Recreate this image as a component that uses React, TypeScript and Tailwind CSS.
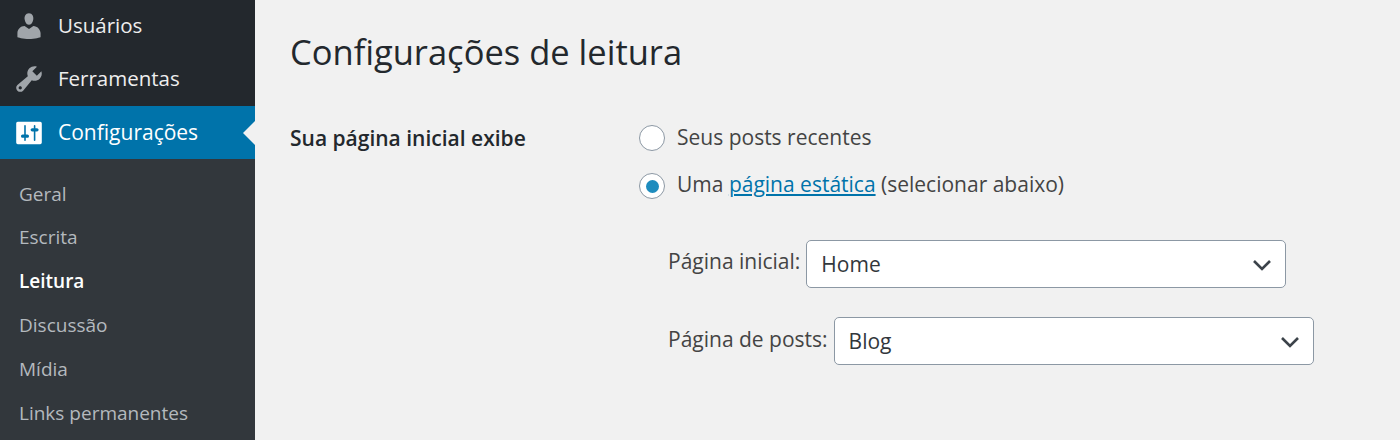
import React from 'react';

const font = "font-['Open_Sans','Noto_Sans',sans-serif]";

function SubItem({ label, active }: { label: string; active?: boolean }) {
  return (
    <div className={`h-[43.8px] flex items-center pl-[19px] text-[19px] ${active ? 'text-white font-semibold' : 'text-[#b4b9be]'}`}>
      {label}
    </div>
  );
}

function Chevron() {
  return (
    <svg width="20" height="12" viewBox="0 0 20 12" fill="none" stroke="#3c434a" strokeWidth="2.6">
      <path d="M2 2l8 8 8-8" />
    </svg>
  );
}

function Select({ value }: { value: string }) {
  return (
    <div className="w-[480px] h-[48px] bg-white border-[1.5px] border-[#8c98a4] rounded-[5px] flex items-center justify-between pl-[14px] pr-[13px] pt-[2px] text-[21px] text-[#32373c]">
      <span>{value}</span>
      <Chevron />
    </div>
  );
}

export default function App() {
  return (
    <div className={`w-[1400px] h-[440px] flex overflow-hidden bg-[#f1f1f1] ${font}`}>
      {/* Sidebar */}
      <div className="w-[255px] shrink-0 bg-[#23282d] flex flex-col">
        <div className="h-[53px] flex items-center gap-[13px] pl-[13px] pb-[2px] text-[20.5px] text-[#eeeeee]">
          <svg width="32" height="32" viewBox="0 0 20 20" fill="#a0a5aa">
            <path d="M10 9.25c-2.27 0-2.73-3.44-2.73-3.44C7 4.02 7.82 2 9.97 2c2.16 0 2.98 2.02 2.71 3.81 0 0-.41 3.44-2.68 3.44zm0 2.57L12.72 10c2.39 0 4.52 2.33 4.52 4.53v2.49s-3.65 1.13-7.24 1.13c-3.65 0-7.24-1.13-7.24-1.13v-2.49c0-2.25 1.94-4.48 4.47-4.48z" />
          </svg>
          <span>Usuários</span>
        </div>
        <div className="h-[53px] flex items-center gap-[13px] pl-[13px] pb-[2px] text-[20.5px] text-[#eeeeee]">
          <svg width="32" height="32" viewBox="0 0 20 20" fill="#a0a5aa">
            <path d="M16.68 9.77c-1.34 1.34-3.3 1.67-4.95.99l-5.41 6.52c-.99.99-2.59.99-3.58 0s-.99-2.59 0-3.57l6.52-5.42c-.68-1.65-.35-3.61.99-4.95 1.28-1.28 3.12-1.62 4.72-1.06l-2.89 2.89 2.82 2.82 2.86-2.87c.53 1.58.18 3.39-1.08 4.65zM3.81 16.21c.4.39 1.04.39 1.43 0 .4-.4.4-1.04 0-1.43-.39-.4-1.03-.4-1.43 0-.39.39-.39 1.03 0 1.43z" />
          </svg>
          <span>Ferramentas</span>
        </div>
        <div className="relative h-[53px] flex items-center gap-[13px] pl-[13px] text-[21px] text-white bg-[#0073aa]">
          <svg width="32" height="32" viewBox="0 0 20 20" fill="#fff">
            <path d="M18 16V4c0-.55-.45-1-1-1H3c-.55 0-1 .45-1 1v12c0 .55.45 1 1 1h14c.55 0 1-.45 1-1zM8 11h1c.55 0 1 .45 1 1s-.45 1-1 1H8v1.500c0 .28-.22.5-.5.5s-.5-.22-.5-.5V13H6c-.55 0-1-.45-1-1s.45-1 1-1h1V5.500c0-.28.22-.5.5-.5s.5.22.5.5V11zm5-2h-1c-.55 0-1-.45-1-1s.45-1 1-1h1V5.500c0-.28.22-.5.5-.5s.5.22.5.5V7h1c.55 0 1 .45 1 1s-.45 1-1 1h-1v5.500c0 .28-.22.5-.5.5s-.5-.22-.5-.5V9z" />
          </svg>
          <span>Configurações</span>
          <span className="absolute right-0 top-[15px] border-y-[12px] border-y-transparent border-r-[12px] border-r-[#f1f1f1]" />
        </div>
        <div className="flex-1 bg-[#32373c] pt-[13px]">
          <SubItem label="Geral" />
          <SubItem label="Escrita" />
          <SubItem label="Leitura" active />
          <SubItem label="Discussão" />
          <SubItem label="Mídia" />
          <SubItem label="Links permanentes" />
        </div>
      </div>

      {/* Content */}
      <div className="flex-1 pl-[35px] text-[#444444]">
        <h1 className="mt-[28px] h-[48px] flex items-center text-[34.5px] font-normal text-[#23282d]">
          Configurações de leitura
        </h1>
        <div className="flex mt-[38px]">
          <div className="w-[349px] shrink-0 text-[21px] font-semibold text-[#23282d] leading-[48px]">
            Sua página inicial exibe
          </div>
          <div className="flex flex-col text-[21px]">
            <div className="flex items-center gap-[12px] h-[48px]">
              <span className="w-[26px] h-[26px] rounded-full bg-white border-[1.5px] border-[#8c98a4]" />
              <span>Seus posts recentes</span>
            </div>
            <div className="flex items-center gap-[12px] h-[48px]">
              <span className="w-[26px] h-[26px] rounded-full bg-white border-[1.5px] border-[#8c98a4] flex items-center justify-center">
                <span className="w-[13px] h-[13px] rounded-full bg-[#1e8cbe]" />
              </span>
              <span className="-mt-[2px]">
                Uma <span className="text-[#0073aa] underline">página estática</span> (selecionar abaixo)
              </span>
            </div>
            <div className="flex items-center gap-[6px] mt-[30px] ml-[29px]">
              <span className="pb-[4px]">Página inicial:</span>
              <Select value="Home" />
            </div>
            <div className="flex items-center gap-[6px] mt-[29px] ml-[29px]">
              <span className="pb-[3px]">Página de posts:</span>
              <Select value="Blog" />
            </div>
          </div>
        </div>
      </div>
    </div>
  );
}
